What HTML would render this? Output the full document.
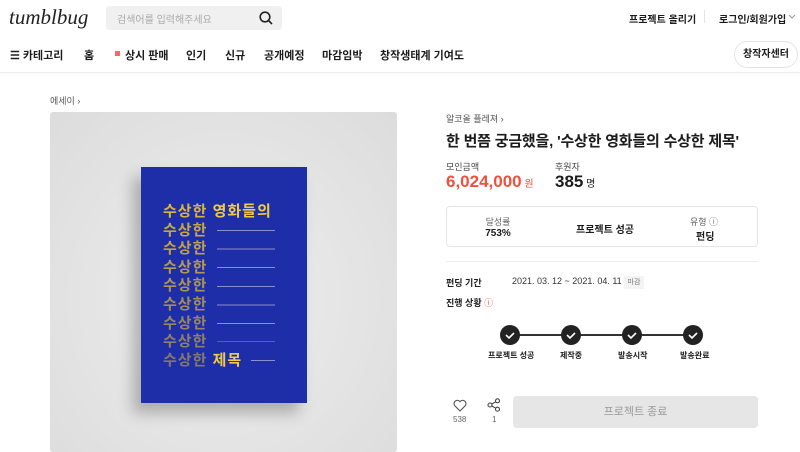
<!DOCTYPE html>
<html><head><meta charset="utf-8"><style>
*{margin:0;padding:0;box-sizing:border-box}
body{width:800px;height:450px;overflow:hidden;background:#fff;font-family:"Liberation Sans","Noto Sans CJK KR",sans-serif;color:#1c1c1c;position:relative}
.a{position:absolute;white-space:nowrap}
.b{font-weight:700}
</style></head><body>
<div class="a" style="left:9px;top:5px;font-family:'Liberation Serif',serif;font-style:italic;font-size:21px;color:#222">tumblbug</div>
<div class="a" style="left:106px;top:6px;width:176px;height:24px;background:#f0f0f0;border-radius:4px"></div>
<div class="a" style="left:117px;top:11px;font-size:10px;color:#aaa">검색어를 입력해주세요</div>
<svg class="a" style="left:258px;top:10px" width="16" height="16" viewBox="0 0 16 16"><circle cx="7" cy="7" r="4.8" fill="none" stroke="#222" stroke-width="1.6"/><path d="M10.5 10.5L14 14" stroke="#222" stroke-width="1.6"/></svg>
<div class="a b" style="left:629px;top:11px;font-size:10px">프로젝트 올리기</div>
<div class="a" style="left:704px;top:10px;width:1px;height:13px;background:#e4e4e4"></div>
<div class="a b" style="left:719px;top:11px;font-size:10px">로그인/회원가입</div>
<svg class="a" style="left:788px;top:14px" width="8" height="6"><path d="M1 1l3 3 3-3" fill="none" stroke="#999" stroke-width="1"/></svg>
<div class="a b" style="left:10px;top:47px;font-size:11px">☰ 카테고리</div>
<div class="a b" style="left:84px;top:47px;font-size:11px">홈</div>
<div class="a" style="left:115px;top:51px;width:5px;height:5px;background:#f66"></div>
<div class="a b" style="left:125px;top:47px;font-size:11px">상시 판매</div>
<div class="a b" style="left:186px;top:47px;font-size:11px">인기</div>
<div class="a b" style="left:225px;top:47px;font-size:11px">신규</div>
<div class="a b" style="left:264px;top:47px;font-size:11px">공개예정</div>
<div class="a b" style="left:322px;top:47px;font-size:11px">마감임박</div>
<div class="a b" style="left:380px;top:47px;font-size:11px">창작생태계 기여도</div>
<div class="a" style="left:734px;top:41px;width:64px;height:27px;border:1px solid #e4e4e4;border-radius:14px;font-size:10px;font-weight:700;text-align:center;line-height:25px">창작자센터</div>
<div class="a" style="left:0;top:72px;width:800px;height:1px;background:#eee;box-shadow:0 1px 2px rgba(0,0,0,.05)"></div>
<div class="a" style="left:50px;top:94px;font-size:9px;color:#555">에세이 ›</div>
<div class="a" style="left:50px;top:112px;width:347px;height:340px;background:radial-gradient(ellipse at 50% 55%,#eeeeee,#dcdcdc);border-radius:3px"></div>
<div class="a" style="left:141px;top:167px;width:166px;height:236px;background:#1e2ea8;box-shadow:-8px 10px 14px rgba(0,0,0,.25)"></div>
<div class="a" style="left:163px;top:203px;font-size:15px;font-weight:700;color:#d9b53a;line-height:18.6px;letter-spacing:1px">
<div>수상한 <span style="color:#f0cc45">영화들의</span></div>
<div style="opacity:.9">수상한</div><div style="opacity:.85">수상한</div><div style="opacity:.8">수상한</div><div style="opacity:.75">수상한</div><div style="opacity:.7">수상한</div><div style="opacity:.65">수상한</div><div style="opacity:.6">수상한</div><div><span style="opacity:.55">수상한</span> <span style="color:#f0cc45">제목</span></div>
</div>
<div class="a" style="left:217px;top:230px;width:58px;height:112px;background:repeating-linear-gradient(#0000 0 0px,#8f8fd0 0 1px,#0000 1px 18.6px)"></div>
<div class="a" style="left:251px;top:360px;width:24px;height:1px;background:#8f8fd0"></div>
<div class="a" style="left:446px;top:112px;font-size:9px;color:#555">알코올 플레져 ›</div>
<div class="a b" style="left:446px;top:130px;font-size:15px;letter-spacing:-0.2px">한 번쯤 궁금했을, '수상한 영화들의 수상한 제목'</div>
<div class="a" style="left:446px;top:160px;font-size:9px;color:#444">모인금액</div>
<div class="a" style="left:555px;top:160px;font-size:9px;color:#444">후원자</div>
<div class="a b" style="left:446px;top:172px;font-size:17px;color:#f0503c">6,024,000<span style="font-size:10px;font-weight:400"> 원</span></div>
<div class="a b" style="left:555px;top:172px;font-size:17px">385<span style="font-size:10px;font-weight:400"> 명</span></div>
<div class="a" style="left:446px;top:206px;width:312px;height:41px;border:1px solid #e6e6e6;border-radius:4px"></div>
<div class="a" style="left:478px;top:215px;width:40px;text-align:center;font-size:9px;color:#666">달성률</div>
<div class="a b" style="left:478px;top:228px;width:40px;text-align:center;font-size:10px">753%</div>
<div class="a b" style="left:576px;top:221px;font-size:10px">프로젝트 성공</div>
<div class="a" style="left:690px;top:215px;font-size:9px;color:#666">유형 ⓘ</div>
<div class="a b" style="left:696px;top:228px;font-size:10px">펀딩</div>
<div class="a" style="left:446px;top:261px;width:312px;height:1px;background:#eee"></div>
<div class="a b" style="left:446px;top:276px;font-size:9px">펀딩 기간</div>
<div class="a" style="left:512px;top:276px;font-size:9px;color:#333">2021. 03. 12 ~ 2021. 04. 11</div>
<div class="a" style="left:624px;top:276px;width:20px;height:13px;background:#f3f3f3;font-size:7px;color:#777;text-align:center;line-height:13px">마감</div>
<div class="a b" style="left:446px;top:296px;font-size:9px">진행 상황 <span style="color:#f0503c;font-weight:400">ⓘ</span></div>
<div class="a" style="left:510px;top:334px;width:184px;height:2px;background:#333"></div>
<svg class="a" style="left:499px;top:324px" width="210" height="22"><g fill="#222"><circle cx="11" cy="11" r="10"/><circle cx="72" cy="11" r="10"/><circle cx="133" cy="11" r="10"/><circle cx="194" cy="11" r="10"/></g><g fill="none" stroke="#fff" stroke-width="1.6"><path d="M7 11l3 3 5-5"/><path d="M68 11l3 3 5-5"/><path d="M129 11l3 3 5-5"/><path d="M190 11l3 3 5-5"/></g></svg>
<div class="a b" style="left:488px;top:350px;font-size:8px">프로젝트 성공</div>
<div class="a b" style="left:560px;top:350px;font-size:8px">제작중</div>
<div class="a b" style="left:618px;top:350px;font-size:8px">발송시작</div>
<div class="a b" style="left:680px;top:350px;font-size:8px">발송완료</div>
<svg class="a" style="left:453px;top:399px" width="14" height="13" viewBox="0 0 14 13"><path d="M7 12L1.8 6.8A3 3 0 0 1 7 2.6A3 3 0 0 1 12.2 6.8Z" fill="none" stroke="#555" stroke-width="1.1"/></svg>
<div class="a" style="left:453px;top:415px;font-size:8px;color:#666">538</div>
<svg class="a" style="left:487px;top:398px" width="14" height="14" viewBox="0 0 14 14"><g fill="none" stroke="#444" stroke-width="1.1"><circle cx="10.5" cy="2.8" r="2"/><circle cx="3" cy="7" r="2"/><circle cx="10.5" cy="11.2" r="2"/><path d="M4.8 6L8.7 3.8M4.8 8L8.7 10.2"/></g></svg>
<div class="a" style="left:492px;top:415px;font-size:8px;color:#666">1</div>
<div class="a" style="left:513px;top:396px;width:245px;height:32px;background:#e6e6e6;border-radius:4px;text-align:center;line-height:32px;font-size:11px;color:#999">프로젝트 종료</div>
</body></html>
